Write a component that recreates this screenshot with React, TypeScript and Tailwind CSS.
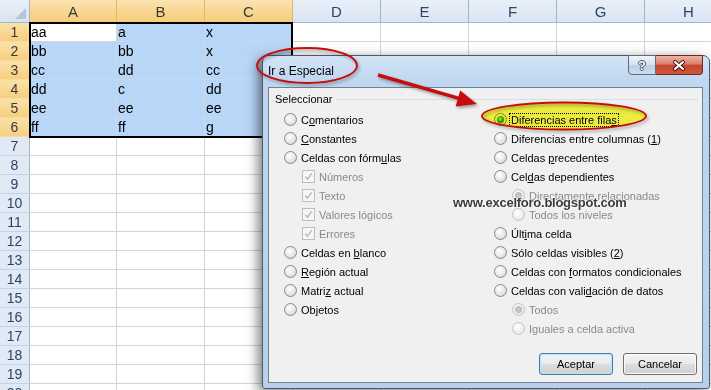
import React from "react";

const COLS = ["A", "B", "C", "D", "E", "F", "G", "H"];
const DATA: string[][] = [
  ["aa", "a", "x"],
  ["bb", "bb", "x"],
  ["cc", "dd", "cc"],
  ["dd", "c", "dd"],
  ["ee", "ee", "ee"],
  ["ff", "ff", "g"],
];

// "&" marks the access key letter (underlined)
function Acc({ t }: { t: string }) {
  const i = t.indexOf("&");
  if (i < 0) return <>{t}</>;
  return (
    <>
      {t.slice(0, i)}
      <span className="underline">{t[i + 1]}</span>
      {t.slice(i + 2)}
    </>
  );
}

function Radio({ checked, disabled }: { checked?: boolean; disabled?: boolean }) {
  return (
    <span
      className={
        disabled
          ? "w-[13px] h-[13px] shrink-0 rounded-full border border-[#c4c4c4] bg-[radial-gradient(circle_at_40%_35%,#ffffff,#ececec_60%,#dedede)] flex items-center justify-center"
          : "w-[13px] h-[13px] shrink-0 rounded-full border border-[#8a8a8a] bg-[radial-gradient(circle_at_40%_35%,#ffffff,#e9e9e9_50%,#c9c9c9)] flex items-center justify-center"
      }
    >
      {checked &&
        (disabled ? (
          <span className="w-[7px] h-[7px] rounded-full border border-[#b0b0b0] bg-[#c8c8c8]" />
        ) : (
          <span className="w-[7px] h-[7px] rounded-full bg-[radial-gradient(circle_at_45%_40%,#9af58a,#2f9a22_55%,#0d4a0a)]" />
        ))}
    </span>
  );
}

function Check() {
  return (
    <span className="w-[13px] h-[13px] shrink-0 border border-[#bdbdbd] bg-[#f6f6f6] flex items-center justify-center">
      <svg width="9" height="9" viewBox="0 0 9 9">
        <path d="M1.3 4.6 L3.5 7.2 L7.7 1.4" stroke="#b3b3b3" strokeWidth="1.2" fill="none" />
      </svg>
    </span>
  );
}

type Item = { t: string; kind: "radio" | "check"; sub?: boolean; dis?: boolean; on?: boolean; focus?: boolean };

const LEFT: Item[] = [
  { t: "C&omentarios", kind: "radio" },
  { t: "&Constantes", kind: "radio" },
  { t: "Celdas con fórm&ulas", kind: "radio" },
  { t: "Números", kind: "check", sub: true, dis: true },
  { t: "Texto", kind: "check", sub: true, dis: true },
  { t: "Valores lógicos", kind: "check", sub: true, dis: true },
  { t: "Errores", kind: "check", sub: true, dis: true },
  { t: "Celdas en &blanco", kind: "radio" },
  { t: "&Región actual", kind: "radio" },
  { t: "Matri&z actual", kind: "radio" },
  { t: "Ob&jetos", kind: "radio" },
];

const RIGHT: Item[] = [
  { t: "Diferencias entre fila&s", kind: "radio", on: true, focus: true },
  { t: "Diferencias entre columnas (&1)", kind: "radio" },
  { t: "Celdas &precedentes", kind: "radio" },
  { t: "Cel&das dependientes", kind: "radio" },
  { t: "Directamente relacionadas", kind: "radio", sub: true, dis: true, on: true },
  { t: "Todos los niveles", kind: "radio", sub: true, dis: true },
  { t: "Últ&ima celda", kind: "radio" },
  { t: "Sólo celdas visibles (&2)", kind: "radio" },
  { t: "Celdas con &formatos condicionales", kind: "radio" },
  { t: "Celdas con vali&dación de datos", kind: "radio" },
  { t: "Todos", kind: "radio", sub: true, dis: true, on: true },
  { t: "Iguales a celda activa", kind: "radio", sub: true, dis: true },
];

function Option({ it }: { it: Item }) {
  return (
    <div className={it.sub ? "h-[19px] flex items-center gap-[3px] pl-[18px]" : "h-[19px] flex items-center gap-[3px]"}>
      {it.kind === "radio" ? <Radio checked={it.on} disabled={it.dis} /> : <Check />}
      <span
        className={
          it.focus
            ? "leading-[12px] px-[1px] outline outline-1 outline-dotted outline-black text-black"
            : it.dis
              ? "leading-[12px] px-[1px] text-[#8a8a8a]"
              : "leading-[12px] px-[1px] text-black"
        }
      >
        <Acc t={it.t} />
      </span>
    </div>
  );
}

function Sheet() {
  const cells: React.ReactNode[] = [];
  cells.push(
    <div key="corner" className="relative border-r border-b border-[#9eb6ce] bg-[linear-gradient(180deg,#e9eff8,#d9e4f1)]">
      <span className="absolute right-[3px] bottom-[3px] w-0 h-0 border-l-[11px] border-l-transparent border-b-[11px] border-b-[#b3c5da]" />
    </div>
  );
  COLS.forEach((c, i) => {
    cells.push(
      <div
        key={c}
        className={
          i < 3
            ? "flex items-center justify-center text-[15px] text-[#3a3a3a] border-r border-b border-r-[#e7b661] border-b-[#d9a74e] bg-[linear-gradient(180deg,#fbe4b2,#f8d793_50%,#f5cd7b)]"
            : "flex items-center justify-center text-[15px] text-[#2c4564] border-r border-b border-[#9eb6ce] bg-[linear-gradient(180deg,#e8eff8,#dae5f2)]"
        }
      >
        {c}
      </div>
    );
  });
  for (let r = 1; r <= 20; r++) {
    const selRow = r <= 6;
    cells.push(
      <div
        key={"h" + r}
        className={
          selRow
            ? "flex items-center justify-center text-[14px] text-[#3a3a3a] border-r border-b border-r-[#d9a74e] border-b-[#f7dca2] bg-[linear-gradient(180deg,#fbe1a9,#f6cf7f)]"
            : "flex items-center justify-center text-[14px] text-[#2c4564] border-r border-b border-r-[#9eb6ce] border-b-[#c3d3e5] bg-[#e0e9f4]"
        }
      >
        {r}
      </div>
    );
    COLS.forEach((c, i) => {
      const inSel = selRow && i < 3;
      const active = r === 1 && i === 0;
      cells.push(
        <div
          key={c + r}
          className={
            active
              ? "flex items-center pl-[1px] text-[14px] text-black bg-white border-r border-b border-[#d4d4d4]"
              : inSel
                ? "flex items-center pl-[1px] text-[14px] text-black bg-[#b8d6f7] border-r border-b border-[#cad8e8]"
                : "flex items-center pl-[1px] text-[14px] text-black bg-white border-r border-b border-[#d4d4d4]"
          }
        >
          {inSel ? DATA[r - 1][i] : ""}
        </div>
      );
    });
  }
  return (
    <div className="grid grid-cols-[30px_87px_88px_88px_88px_88px_88px_88px_88px] grid-rows-[23px_repeat(20,19px)] leading-none">
      {cells}
    </div>
  );
}

export default function App() {
  return (
    <div className="relative w-[711px] h-[390px] overflow-hidden bg-white font-['Liberation_Sans',Arial,sans-serif]">
      <Sheet />
      {/* selection outline A1:C6 */}
      <div className="absolute left-[29px] top-[22px] w-[264px] h-[116px] border-2 border-black pointer-events-none" />

      {/* dialog window */}
      <div className="absolute left-[262px] top-[55px] w-[448px] h-[334px] flex flex-col rounded-t-[7px] rounded-b-[3px] border border-[#4a596b] bg-[linear-gradient(180deg,#d3e4f6_0px,#bed6ef_28px,#b8d0ea_100%)] pl-[5px] pr-[6px] pb-[5px] shadow-[-4px_3px_12px_rgba(0,0,0,0.5)]">
        <div className="h-[31px] pt-[8px] text-[12px] leading-[14px] text-black">Ir a Especial</div>
        <div className="absolute right-[6px] top-[-1px] flex">
          <div className="w-[28px] h-[20px] rounded-bl-[4px] border border-[#5b6b80] bg-[linear-gradient(180deg,#eef3fa,#d6e2ef_48%,#bccfe4_52%,#cddced)] flex items-center justify-center text-[13px] font-bold leading-none text-[#f7f9fc] [text-shadow:1px_0_0_#4a5566,-1px_0_0_#4a5566,0_1px_0_#4a5566,0_-1px_0_#4a5566]">
            ?
          </div>
          <div className="w-[47px] h-[20px] rounded-br-[4px] border border-l-0 border-[#6a2a22] bg-[linear-gradient(180deg,#eeb4a8,#dc7c68_45%,#c4442e_52%,#d3573d)] flex items-center justify-center">
            <svg width="14" height="11" viewBox="0 0 14 11">
              <path d="M3 2 L11 9 M11 2 L3 9" stroke="#3a1410" strokeWidth="3.8" strokeLinecap="round" />
              <path d="M3 2 L11 9 M11 2 L3 9" stroke="#ffffff" strokeWidth="2.1" strokeLinecap="round" />
            </svg>
          </div>
        </div>

        <div className="flex-1 flex flex-col border border-[#6f8198] bg-[#f0f0f0] text-[11px]">
          <div className="mt-[4px] h-[14px] flex items-center pl-[6px] pr-[4px]">
            <span className="leading-[14px] text-black">Seleccionar</span>
            <span className="flex-1 h-px ml-[5px] bg-[#d5dfe5]" />
          </div>
          <div className="mt-[4px] pl-[15px] grid grid-cols-[210px_1fr]">
            <div className="flex flex-col">
              {LEFT.map((it) => (
                <Option key={it.t} it={it} />
              ))}
            </div>
            <div className="flex flex-col">
              {RIGHT.map((it) => (
                <Option key={it.t} it={it} />
              ))}
            </div>
          </div>
          <div className="mt-[15px] flex justify-end gap-[10px] pr-[5px]">
            <button className="w-[74px] h-[22px] rounded-[3px] border border-[#3c7fb1] bg-[linear-gradient(180deg,#f2f2f2,#ebebeb_48%,#dddddd_52%,#cfcfcf)] shadow-[inset_0_0_0_1px_#bfe3f6] text-[11px] text-black">
              Aceptar
            </button>
            <button className="w-[74px] h-[22px] rounded-[3px] border border-[#707070] bg-[linear-gradient(180deg,#f2f2f2,#ebebeb_48%,#dddddd_52%,#cfcfcf)] shadow-[inset_0_0_0_1px_#fbfbfb] text-[11px] text-black">
              Cancelar
            </button>
          </div>
        </div>
      </div>

      {/* yellow highlight behind the chosen option */}
      <div className="absolute left-[482px] top-[102px] w-[164px] h-[28px] rounded-[50%] bg-[#fafa44] mix-blend-multiply pointer-events-none" />

      {/* red marks */}
      <svg className="absolute left-0 top-0 pointer-events-none" width="711" height="390" viewBox="0 0 711 390">
        <defs>
          <filter id="sh" x="-20%" y="-40%" width="140%" height="180%">
            <feDropShadow dx="1.5" dy="2" stdDeviation="1.4" floodColor="#000" floodOpacity="0.35" />
          </filter>
        </defs>
        <g filter="url(#sh)" fill="none" stroke="#c40d0d">
          <ellipse cx="307" cy="65.5" rx="50" ry="17.5" strokeWidth="1.8" />
          <ellipse cx="564" cy="116" rx="82" ry="13.5" strokeWidth="1.8" />
          <line x1="378" y1="75" x2="459" y2="98.4" strokeWidth="3.4" />
          <polygon points="477,104 455.6,106.5 460.2,90.5" fill="#c40d0d" stroke="none" />
        </g>
      </svg>

      {/* watermark */}
      <div className="absolute left-[453px] top-[195px] text-[13px] leading-[15px] font-bold tracking-[-0.25px] text-[#3b3b3b] [text-shadow:0_0_2px_#ffffff,0_0_2px_#ffffff] pointer-events-none">
        www.excelforo.blogspot.com
      </div>
    </div>
  );
}
